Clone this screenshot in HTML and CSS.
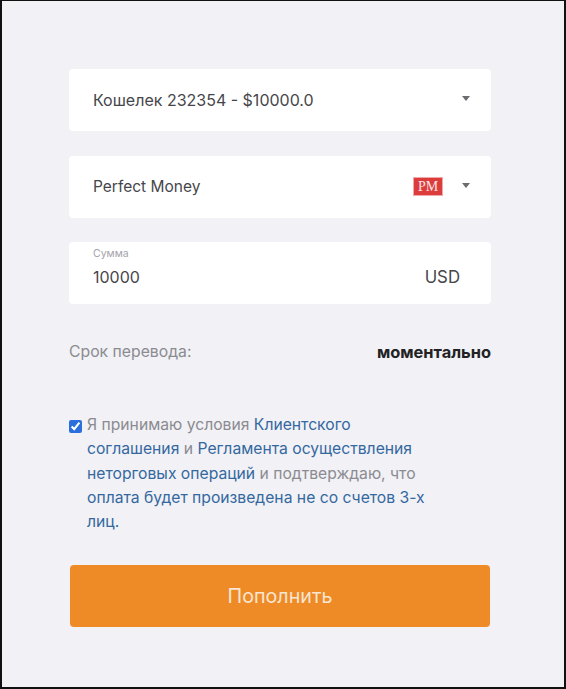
FILE: index.html
```html
<!DOCTYPE html>
<html lang="en">
  <head>
    <meta charset="UTF-8" />
    <meta name="viewport" content="width=device-width, initial-scale=1.0" />
    <title>Пополнение</title>
    <link rel="stylesheet" href="styles.css">
  </head>
  <body>
    <main class="form">
      <div class="field select wallet">
        <span class="value wide">Кошелек 232354 - $10000.0</span>
        <span class="arrow"></span>
      </div>
      <div class="field select method">
        <span class="value">Perfect Money</span>
        <span class="pm-logo">PM</span>
        <span class="arrow"></span>
      </div>
      <div class="field amount">
        <div class="amount-left">
          <span class="label">Сумма</span>
          <span class="value wide">10000</span>
        </div>
        <span class="value currency">USD</span>
      </div>
      <div class="term">
        <span class="term-label">Срок перевода:</span>
        <span class="term-value">моментально</span>
      </div>
      <div class="agree">
        <input class="check" type="checkbox" checked>
        <p class="agree-text">Я принимаю условия <a href="#">Клиентского соглашения</a> и <a href="#">Регламента осуществления неторговых операций</a> и подтверждаю, что <a href="#">оплата будет произведена не со счетов 3-х лиц.</a></p>
      </div>
      <button class="submit">Пополнить</button>
    </main>
  </body>
</html>
```

FILE: styles.css
```css
* {
  box-sizing: border-box;
}
html,
body {
  height: 100%;
}
body {
  margin: 0;
  background: #f1f1f6;
  border: 1px solid #111;
  border-width: 1px 2px 2px 2px;
  font-family: Inter, "Liberation Sans", sans-serif;
  color: #333;
}
.form {
  width: 422px;
  margin-left: 67px;
  padding-top: 68px;
}
.field {
  height: 62px;
  background: #fff;
  border-radius: 4px;
  display: flex;
  align-items: center;
  padding: 0 21px 0 24px;
}
.select {
  padding-bottom: 1px;
}
.value {
  font-size: 15.5px;
  line-height: 20px;
  color: #46464a;
}
.wide {
  font-size: 16px;
}
.currency {
  font-size: 16.8px;
}
.select .value {
  flex: 1;
}
.method {
  margin-top: 25px;
}
.amount {
  margin-top: 24px;
  justify-content: space-between;
  align-items: flex-end;
  padding-right: 31px;
  padding-bottom: 17px;
}
.amount-left {
  display: flex;
  flex-direction: column;
}
.label {
  font-size: 10.5px;
  line-height: 12px;
  color: #a3a3a8;
  margin-bottom: 7px;
}
.arrow {
  width: 0;
  height: 0;
  margin-bottom: 3px;
  border-left: 4px solid transparent;
  border-right: 4px solid transparent;
  border-top: 5px solid #6b6b70;
}
.pm-logo {
  width: 30px;
  height: 19px;
  margin-right: 19px;
  background: #dd3c3c;
  border: 1px solid #f0aaaa;
  color: #fbe4e4;
  font-family: "Liberation Serif", serif;
  font-size: 14px;
  line-height: 17px;
  text-align: center;
}
.term {
  display: flex;
  justify-content: space-between;
  margin-top: 38px;
  font-size: 15.75px;
  line-height: 20px;
}
.term-label {
  color: #8b8b90;
}
.term-value {
  font-weight: 700;
  color: #222;
  font-size: 16.4px;
}
.agree {
  display: flex;
  align-items: flex-start;
  margin-top: 51px;
  padding-right: 50px;
}
.check {
  width: 13px;
  height: 13px;
  margin: 7px 5px 0 0;
  flex: none;
  accent-color: #2a6fdb;
}
.agree-text {
  margin: 0;
  font-size: 15.7px;
  line-height: 24.3px;
  color: #8b8b90;
}
.agree-text a {
  color: #34689f;
  text-decoration: none;
}
.submit {
  display: block;
  width: 420px;
  height: 62px;
  margin: 31px 0 0 1px;
  border: none;
  border-radius: 4px;
  background: #ef8b27;
  color: #f8e6d2;
  font-family: inherit;
  font-size: 19.7px;
}
```
